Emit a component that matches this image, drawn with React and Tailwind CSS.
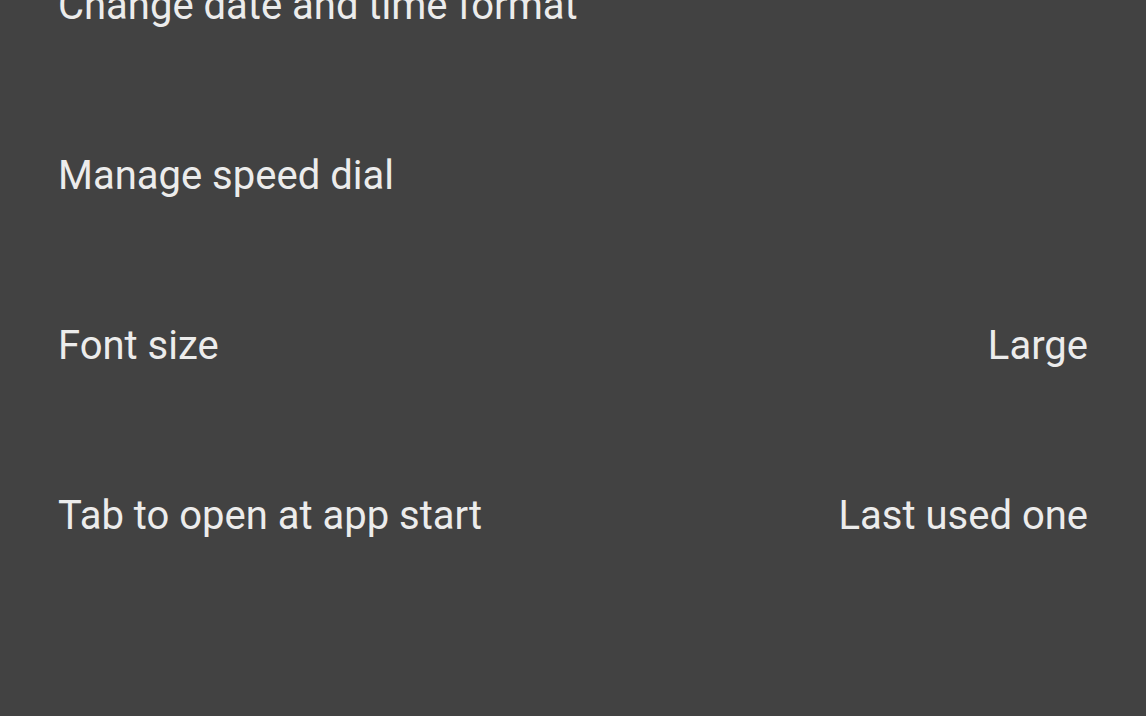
const rows = [
  { label: 'Change date and time format' },
  { label: 'Manage speed dial' },
  { label: 'Font size', value: 'Large' },
  { label: 'Tab to open at app start', value: 'Last used one' },
];

export default function App() {
  return (
    <div className="h-[716px] w-full overflow-hidden bg-[#424242] font-['Roboto',sans-serif] text-[#ececec]">
      <div className="-mt-[79px] flex flex-col">
        {rows.map((row) => (
          <div key={row.label} className="flex h-[170px] items-center justify-between px-[58px]">
            <span className="text-[40px] leading-none">{row.label}</span>
            {row.value && <span className="text-[40px] leading-none">{row.value}</span>}
          </div>
        ))}
      </div>
    </div>
  );
}
